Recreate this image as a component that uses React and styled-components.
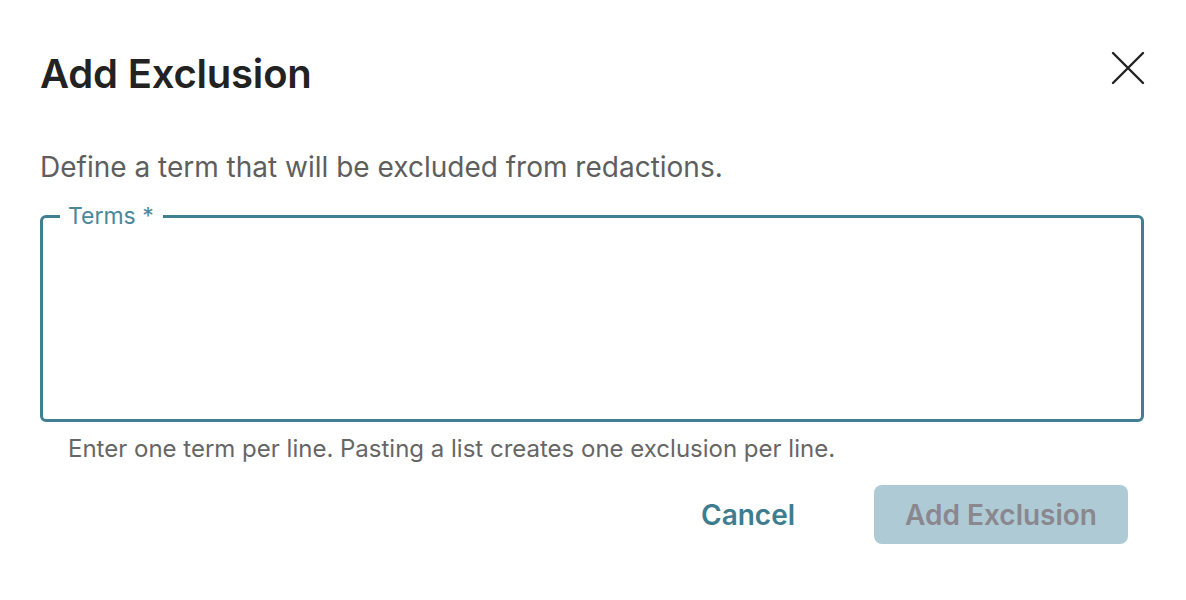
import React from "react";
import styled, { createGlobalStyle } from "styled-components";

const Global = createGlobalStyle`
  html, body { margin: 0; padding: 0; background: #ffffff; }
  body { font-family: Inter, "Noto Sans", sans-serif; -webkit-font-smoothing: antialiased; }
  * { box-sizing: border-box; }
`;

const Dialog = styled.div`
  width: 1186px;
  height: 600px;
  padding: 48px 42px 0 40px;
  display: flex;
  flex-direction: column;
`;

const Header = styled.div`
  display: flex;
  align-items: flex-start;
  justify-content: space-between;
`;

const Title = styled.h2`
  margin: 0;
  font-size: 40px;
  line-height: 52px;
  font-weight: 600;
  color: #222222;
  letter-spacing: -0.2px;
`;

const CloseButton = styled.button`
  border: 0;
  background: transparent;
  padding: 0;
  width: 36px;
  height: 36px;
  margin-top: 2px;
  margin-right: -2px;
  display: flex;
  align-items: center;
  justify-content: center;
  cursor: pointer;
  color: #222222;
`;

const Description = styled.p`
  margin: 47px 0 0 0;
  font-size: 28px;
  line-height: 40px;
  color: #5e5e5e;
  font-weight: 400;
`;

const Field = styled.fieldset`
  margin: 16px 0 0 0;
  padding: 0 17px;
  height: 219px;
  border: 3px solid #417f93;
  border-radius: 6px;
  min-width: 0;
`;

const Legend = styled.legend`
  padding: 0 9px 0 8px;
  font-size: 23px;
  line-height: 26px;
  color: #4a8799;
  font-weight: 400;
`;

const TextArea = styled.textarea`
  width: 100%;
  height: 170px;
  border: 0;
  outline: none;
  resize: none;
  font: inherit;
  font-size: 24px;
  background: transparent;
`;

const Helper = styled.div`
  margin: 12px 0 0 28px;
  font-size: 24px;
  line-height: 30px;
  color: #666666;
`;

const Actions = styled.div`
  display: flex;
  justify-content: flex-end;
  align-items: center;
  gap: 71px;
  margin-top: 21px;
  padding-right: 16px;
`;

const TextButton = styled.button`
  border: 0;
  font-family: inherit;
  font-size: 28px;
  font-weight: 600;
  color: ${(p) => p.$color};
  padding: 0 ${(p) => p.$padX}px;
  height: 59px;
  border-radius: 8px;
  background: ${(p) => p.$bg};
  cursor: pointer;
`;

export default function App() {
  return (
    <>
      <Global />
      <Dialog>
        <Header>
          <Title>Add Exclusion</Title>
          <CloseButton aria-label="Close">
            <svg width="34" height="34" viewBox="0 0 34 34" fill="none">
              <path d="M2 2L32 32M32 2L2 32" stroke="#222" strokeWidth="2.4" strokeLinecap="round" />
            </svg>
          </CloseButton>
        </Header>
        <Description>Define a term that will be excluded from redactions.</Description>
        <Field>
          <Legend>Terms *</Legend>
          <TextArea />
        </Field>
        <Helper>Enter one term per line. Pasting a list creates one exclusion per line.</Helper>
        <Actions>
          <TextButton $color="#3d7d8f" $bg="transparent" $padX={8}>Cancel</TextButton>
          <TextButton $color="#8a878f" $bg="#aecbd5" $padX={31}>Add Exclusion</TextButton>
        </Actions>
      </Dialog>
    </>
  );
}
